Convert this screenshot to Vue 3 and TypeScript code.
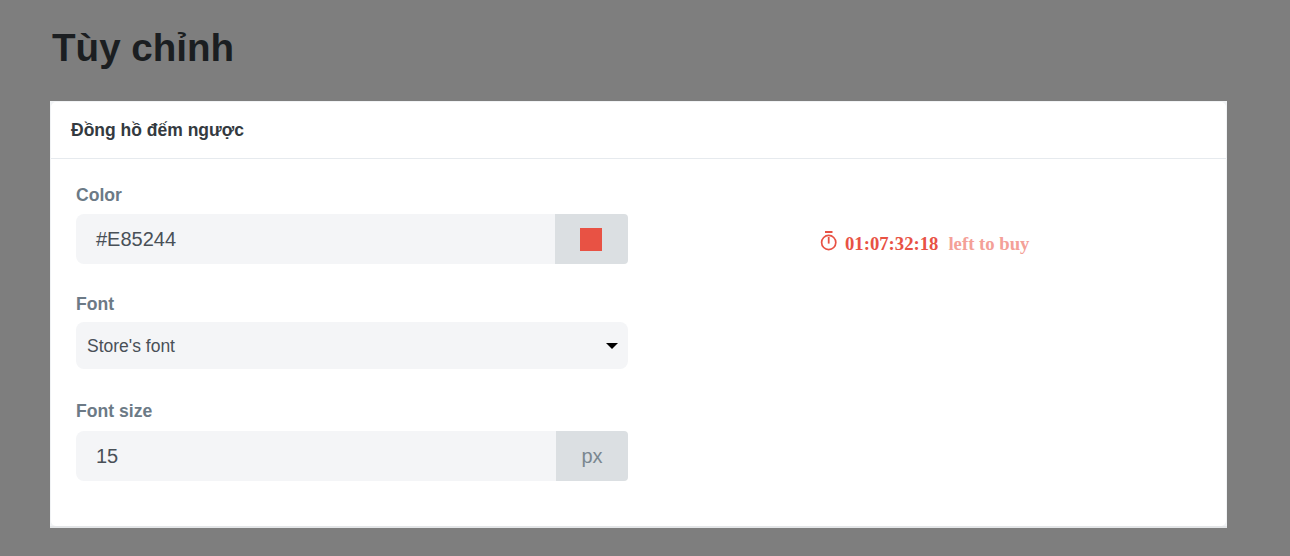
<script setup lang="ts">
const title: string = "Tùy chỉnh";
</script>

<template>
  <div class="page">
    <h1 class="title">{{ title }}</h1>
    <section class="card">
      <div class="card-inner">
        <header class="card-head">Đồng hồ đếm ngược</header>
        <div class="card-body">
          <div class="form">
            <div class="field">
              <label class="label">Color</label>
              <div class="group">
                <div class="input">#E85244</div>
                <div class="addon color-addon"><span class="swatch"></span></div>
              </div>
            </div>
            <div class="field field-font">
              <label class="label">Font</label>
              <div class="select">
                <span>Store's font</span>
                <span class="caret"></span>
              </div>
            </div>
            <div class="field field-size">
              <label class="label">Font size</label>
              <div class="group">
                <div class="input">15</div>
                <div class="addon px-addon">px</div>
              </div>
            </div>
          </div>
          <div class="preview">
            <svg class="timer" width="18" height="20" viewBox="0 0 18 20" fill="none" stroke="#e85244" stroke-width="1.7">
              <path d="M5 1h7.5" stroke-width="2" />
              <circle cx="8.7" cy="11.5" r="7.1" />
              <path d="M8.7 6v6.6" stroke-width="1.8" />
            </svg>
            <span class="time">01:07:32:18</span>
            <span class="left">left to buy</span>
          </div>
        </div>
      </div>
    </section>
  </div>
</template>

<style scoped>
.page {
  height: 556px;
  box-sizing: border-box;
  padding: 24px 63px 0 50px;
  background: #7e7e7e;
  font-family: "Liberation Sans", Arial, sans-serif;
  overflow: hidden;
}
.title {
  margin: 0 0 29px 2px;
  height: 48px;
  font-size: 38.6px;
  line-height: 48px;
  font-weight: 700;
  color: #1b1e21;
}
.card {
  height: 427px;
  box-sizing: border-box;
  padding: 1px 1px 0;
  background: #f1f3f5;
  border-bottom: 2px solid #e3e5e7;
}
.card-inner {
  height: 100%;
  background: #fff;
  border-radius: 5px;
}
.card-head {
  height: 57px;
  box-sizing: border-box;
  padding: 0 20px;
  border-bottom: 1px solid #e6eaee;
  font-size: 17.5px;
  font-weight: 700;
  line-height: 56px;
  color: #343a40;
}
.card-body {
  display: flex;
  padding: 24px 25px 0;
}
.form {
  width: 552px;
}
.label {
  display: block;
  height: 24px;
  margin-bottom: 7px;
  font-size: 17.6px;
  font-weight: 700;
  line-height: 24px;
  color: #6c7a86;
}
.group {
  display: flex;
  height: 50px;
  border-radius: 8px 4px 4px 8px;
  overflow: hidden;
}
.input {
  flex: 1;
  padding-left: 20px;
  background: #f4f5f7;
  font-size: 20px;
  line-height: 50px;
  color: #495057;
}
.addon {
  display: flex;
  align-items: center;
  justify-content: center;
  background: #dbdfe2;
}
.color-addon {
  width: 73px;
  padding-right: 2px;
  box-sizing: border-box;
}
.swatch {
  width: 22px;
  height: 23px;
  background: #e85244;
}
.px-addon {
  width: 72px;
  font-size: 20px;
  color: #7a8790;
}
.field-font {
  margin-top: 28px;
}
.field-font .label {
  margin-bottom: 6px;
}
.field-size {
  margin-top: 30px;
}
.field-size .label {
  margin-bottom: 8px;
}
.select {
  display: flex;
  align-items: center;
  justify-content: space-between;
  height: 47px;
  padding: 2px 10px 0 11px;
  box-sizing: border-box;
  border-radius: 8px;
  background: #f4f5f7;
  font-size: 17.5px;
  color: #495057;
}
.caret {
  width: 0;
  height: 0;
  margin-bottom: 2px;
  border-left: 6px solid transparent;
  border-right: 6px solid transparent;
  border-top: 6px solid #000;
}
.preview {
  display: flex;
  align-items: center;
  height: 20px;
  margin: 50px 0 0 192px;
  padding-top: 1px;
  font-family: "Liberation Serif", "Times New Roman", serif;
  font-size: 18.7px;
  font-weight: 700;
  white-space: nowrap;
}
.timer {
  margin: 0 7px 7px 0;
}
.time {
  color: #e85244;
}
.left {
  margin-left: 10px;
  color: #f4a097;
}
</style>
